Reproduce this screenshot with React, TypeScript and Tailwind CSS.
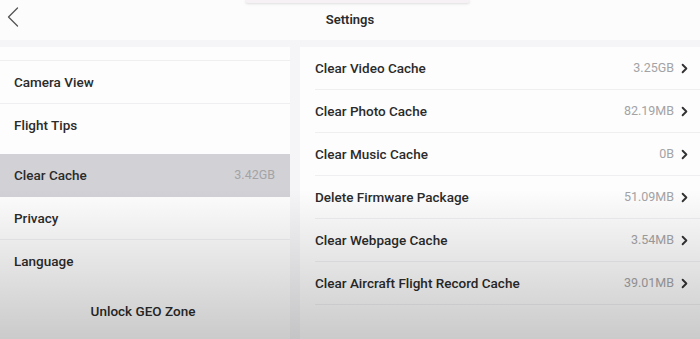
import { ChevronRight } from "lucide-react";

const leftTop = ["Camera View", "Flight Tips"];
const leftBottom = ["Privacy", "Language"];

const cacheRows = [
  { label: "Clear Video Cache", size: "3.25GB" },
  { label: "Clear Photo Cache", size: "82.19MB" },
  { label: "Clear Music Cache", size: "0B" },
  { label: "Delete Firmware Package", size: "51.09MB" },
  { label: "Clear Webpage Cache", size: "3.54MB" },
  { label: "Clear Aircraft Flight Record Cache", size: "39.01MB" },
];

const App = () => {
  return (
    <div
      className="relative flex h-[339px] w-[700px] flex-col overflow-hidden bg-[#f5f5f7] text-[#2b2b2b]"
      style={{ fontFamily: "Roboto, 'Noto Sans', sans-serif" }}
    >
      {/* header */}
      <div className="relative flex h-[40px] items-center justify-center bg-[#fcfcfd]">
        <div className="absolute left-[245px] top-0 h-[3px] w-[225px] rounded-b bg-[#f6f1f4] shadow-sm" />
        <svg className="absolute left-[7px] top-[7px]" width="12" height="20" viewBox="0 0 12 20" fill="none">
          <path d="M10.5 1 L1.5 10 L10.5 19" stroke="#555" strokeWidth="1.3" strokeLinecap="round" strokeLinejoin="round" />
        </svg>
        <span className="text-[13px] font-semibold">Settings</span>
      </div>

      <div className="mt-[7px] flex flex-1 gap-[10px]">
        {/* left panel */}
        <div className="flex w-[290px] flex-col bg-[#fdfdfd]">
          <div className="h-[14px] border-b border-[#efeff1]" />
          {leftTop.map((item, i) => (
            <div
              key={item}
              className={`flex h-[43px] items-center pl-[14px] text-[13.5px] font-medium ${
                i === 0 ? "border-b border-[#efeff1]" : ""
              }`}
            >
              {item}
            </div>
          ))}
          <div className="mt-[7px] flex h-[43px] items-center justify-between bg-[#d2d2d6] pl-[14px] pr-[15px]">
            <span className="text-[13.5px] font-medium">Clear Cache</span>
            <span className="text-[12.5px] text-[#a3a3a6]">3.42GB</span>
          </div>
          {leftBottom.map((item, i) => (
            <div
              key={item}
              className={`flex h-[43px] items-center pl-[14px] text-[13.5px] font-medium ${
                i === 0 ? "border-b border-[#efeff1]" : ""
              }`}
            >
              {item}
            </div>
          ))}
          <div className="mt-[7px] flex h-[42px] items-center justify-center pr-[4px] text-[13.5px] font-medium">
            Unlock GEO Zone
          </div>
        </div>

        {/* right panel */}
        <div className="flex flex-1 flex-col bg-[#fdfdfd]">
          {cacheRows.map((row) => (
            <div key={row.label} className="ml-[15px] flex h-[43px] items-center justify-between border-b border-[#efeff1] pr-[8px]">
              <span className="text-[13.5px] font-medium">{row.label}</span>
              <div className="flex items-center gap-[3px]">
                <span className="text-[12.5px] text-[#a3a3a6]">{row.size}</span>
                <ChevronRight className="h-[15px] w-[15px] text-[#333]" strokeWidth={3} />
              </div>
            </div>
          ))}
        </div>
      </div>

      {/* screen vignette */}
      <div className="pointer-events-none absolute inset-x-0 bottom-0 h-[150px] bg-gradient-to-b from-transparent to-black/20" />
    </div>
  );
};

export default App;
